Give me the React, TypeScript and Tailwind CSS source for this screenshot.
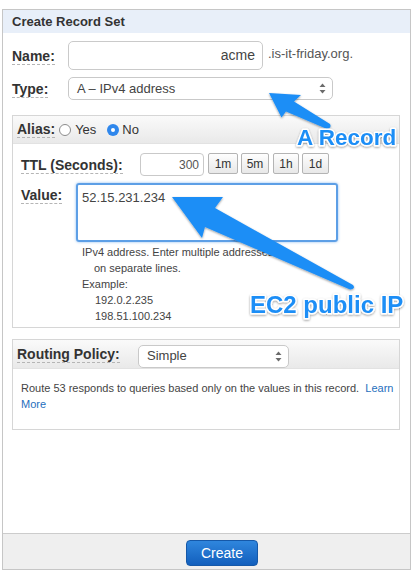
import type { ReactNode } from "react";

const FONT = "font-['Liberation_Sans',Arial,sans-serif]";

function Label({ children, className = "" }: { children: ReactNode; className?: string }) {
  return (
    <span
      className={`inline-block text-[14px] font-bold leading-[16px] text-[#333] border-b border-dashed border-[#b5b5b5] ${className}`}
    >
      {children}
    </span>
  );
}

function SelectArrows() {
  return (
    <svg width="7" height="11" viewBox="0 0 7 11" className="shrink-0">
      <path d="M3.5 0.5 L6.5 4 L0.5 4 Z" fill="#6b6b6b" />
      <path d="M3.5 10.5 L6.5 7 L0.5 7 Z" fill="#6b6b6b" />
    </svg>
  );
}

function FakeSelect({ value, width }: { value: string; width: string }) {
  return (
    <div
      className={`${width} h-[23px] flex items-center justify-between rounded-[5px] border border-[#c9c9c9] bg-white pl-[8px] pr-[6px] text-[13px] text-[#444]`}
    >
      <span>{value}</span>
      <SelectArrows />
    </div>
  );
}

function TtlButton({ children, width }: { children: ReactNode; width: string }) {
  return (
    <div
      className={`${width} h-[21px] flex items-center justify-center rounded-[2px] border border-[#b4b4b4] bg-gradient-to-b from-[#fefefe] to-[#e8e8e8] text-[12px] text-[#333]`}
    >
      {children}
    </div>
  );
}

function Radio({ checked }: { checked?: boolean }) {
  if (checked) {
    return (
      <span className="block w-[12px] h-[12px] rounded-full bg-[#2f87ec] flex items-center justify-center">
        <span className="block w-[4px] h-[4px] rounded-full bg-white" />
      </span>
    );
  }
  return <span className="block w-[12px] h-[12px] rounded-full border border-[#8c8c8c] bg-white" />;
}

function Annotations() {
  return (
    <svg
      className="absolute left-0 top-0 pointer-events-none"
      width="418"
      height="577"
      viewBox="0 0 418 577"
    >
      <defs>
        <filter id="sh" x="-20%" y="-20%" width="140%" height="140%">
          <feDropShadow dx="0" dy="1" stdDeviation="1.1" floodColor="#000" floodOpacity="0.4" />
        </filter>
      </defs>
      {/* arrow to the Type select */}
      <path
        d="M269 93 L301 95 L294 101.5 L330 124 Q332 128 327 129 L286 111.5 L281.5 117.5 Z"
        fill="#1e8ef6"
        filter="url(#sh)"
      />
      {/* arrow to the value box */}
      <path
        d="M172 197 L223 197 L215 208 L353 285 Q356 289 350 289.5 L205 227 L202 238 Z"
        fill="#1e8ef6"
        filter="url(#sh)"
      />
      <text
        x="297"
        y="145"
        fontSize="22.5"
        fontWeight="700"
        fontFamily="'Liberation Sans', Arial, sans-serif"
        fill="#1e8ef6"
        stroke="#fff"
        strokeWidth="3"
        strokeLinejoin="round"
        paintOrder="stroke"
        filter="url(#sh)"
      >
        A Record
      </text>
      <text
        x="250"
        y="313"
        fontSize="24"
        fontWeight="700"
        fontFamily="'Liberation Sans', Arial, sans-serif"
        fill="#1e8ef6"
        stroke="#fff"
        strokeWidth="3"
        strokeLinejoin="round"
        paintOrder="stroke"
        filter="url(#sh)"
      >
        EC2 public IP
      </text>
    </svg>
  );
}

export default function App() {
  return (
    <div className={`relative w-[418px] h-[577px] bg-white overflow-hidden ${FONT}`}>
      <div className="ml-[2px] mt-[9px] w-[409px] h-[561px] border border-[#c6c6c6] flex flex-col">
        <div className="h-[23px] shrink-0 bg-[#e8eff9] pl-[9px] flex items-center text-[13px] font-bold text-[#333]">
          Create Record Set
        </div>

        <div className="pl-[9px] pt-[8px]">
          <div className="flex items-center h-[29px]">
            <div className="w-[56px]">
              <Label>Name:</Label>
            </div>
            <div className="w-[195px] h-[29px] rounded-[5px] border border-[#cacaca] flex items-center justify-end pr-[7px] text-[14px] text-[#444]">
              acme
            </div>
            <span className="ml-[5px] -mt-[3px] text-[13px] text-[#555]">.is-it-friday.org.</span>
          </div>

          <div className="flex items-center mt-[7px] h-[23px]">
            <div className="w-[56px]">
              <Label>Type:</Label>
            </div>
            <FakeSelect value="A – IPv4 address" width="w-[265px]" />
          </div>

          <div className="mt-[15px] w-[388px] border border-[#d6d6d6]">
            <div className="h-[28px] bg-gradient-to-b from-[#fafafa] to-[#e9e9e9] border-b border-[#e2e2e2] pl-[4px] flex items-center text-[13px] text-[#333]">
              <Label>Alias:</Label>
              <span className="ml-[4px] mr-[4px]">
                <Radio />
              </span>
              <span>Yes</span>
              <span className="ml-[11px] mr-[3px]">
                <Radio checked />
              </span>
              <span>No</span>
            </div>

            <div className="pl-[8px] pt-[9px] pb-[3px]">
              <div className="flex items-center h-[23px]">
                <div className="w-[119px]">
                  <Label>TTL (Seconds):</Label>
                </div>
                <div className="w-[64px] h-[23px] rounded-[4px] border border-[#c9c9c9] flex items-center justify-end pr-[4px] text-[12px] text-[#555]">
                  300
                </div>
                <div className="ml-[4px] flex -mt-[2px]">
                  <TtlButton width="w-[30px]">1m</TtlButton>
                  <span className="w-[3px]" />
                  <TtlButton width="w-[28px]">5m</TtlButton>
                  <span className="w-[4px]" />
                  <TtlButton width="w-[26px]">1h</TtlButton>
                  <span className="w-[3px]" />
                  <TtlButton width="w-[27px]">1d</TtlButton>
                </div>
              </div>

              <div className="flex items-start mt-[7px]">
                <div className="w-[55px]">
                  <Label>Value:</Label>
                </div>
                <div className="w-[262px] h-[59px] rounded-[3px] border-2 border-[#5d9fe6] shadow-[0_0_3px_#8cbcf0] pl-[4px] pt-[5px] text-[13px] leading-[15px] text-[#444]">
                  52.15.231.234
                </div>
              </div>

              <div className="pl-[61px] mt-[2px] text-[11px] leading-[16px] text-[#444]">
                <div>IPv4 address. Enter multiple addresses</div>
                <div className="pl-[12px]">on separate lines.</div>
                <div>Example:</div>
                <div className="pl-[13px]">192.0.2.235</div>
                <div className="pl-[13px]">198.51.100.234</div>
              </div>
            </div>
          </div>

          <div className="mt-[11px] w-[388px] border border-[#d6d6d6]">
            <div className="h-[29px] bg-gradient-to-b from-[#fafafa] to-[#e9e9e9] border-b border-[#e2e2e2] pl-[4px] flex items-center">
              <div className="w-[121px]">
                <Label>Routing Policy:</Label>
              </div>
              <div className="mt-[4px]">
                <FakeSelect value="Simple" width="w-[151px]" />
              </div>
            </div>
            <div className="pl-[8px] pt-[11px] pb-[17px] text-[11px] leading-[16px] text-[#444]">
              <div className="whitespace-nowrap">
                Route 53 responds to queries based only on the values in this record.{"\u00a0 "}
                <span className="text-[#1f6fbd]">Learn</span>
              </div>
              <div className="text-[#1f6fbd]">More</div>
            </div>
          </div>
        </div>

        <div className="mt-auto h-[36px] shrink-0 border-t border-[#cccccc] bg-[#efefef] pt-[6px]">
          <div className="ml-[183px] w-[72px] h-[26px] rounded-[4px] bg-gradient-to-b from-[#2f86dd] to-[#125fbd] border border-[#1558a8] flex items-center justify-center text-[14px] text-white">
            Create
          </div>
        </div>
      </div>

      <Annotations />
    </div>
  );
}
